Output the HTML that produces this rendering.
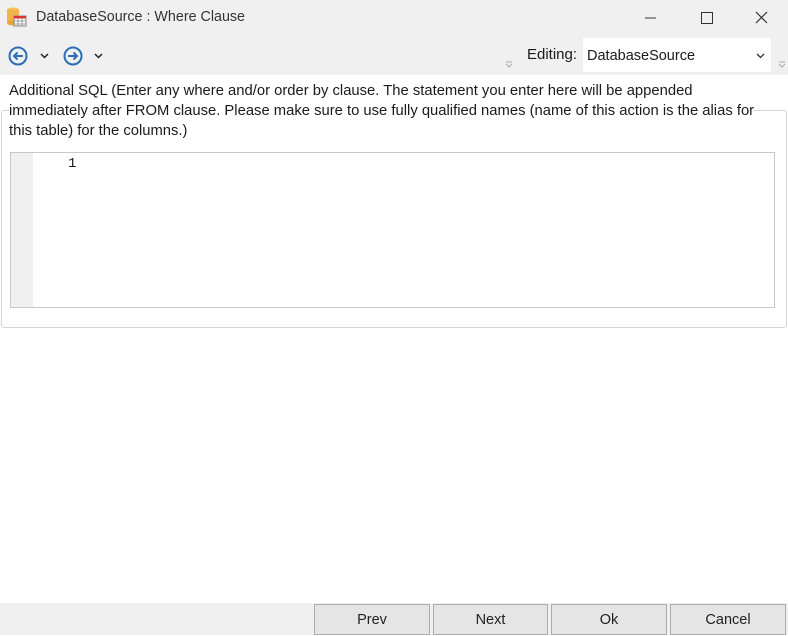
<!DOCTYPE html>
<html><head><style>
body{margin:0;width:788px;height:635px;background:#fff;font-family:"Liberation Sans",sans-serif;position:relative;overflow:hidden;color:#1a1a1a}
.abs{position:absolute}
.btn{position:absolute;top:604px;height:31px;background:#e5e5e5;border:1px solid #adadad;box-sizing:border-box;font-size:14.5px;text-align:center;line-height:31px;color:#222}
</style></head><body>
<div class="abs" style="left:0;top:0;width:788px;height:75px;background:#f0f0f0"></div>
<svg class="abs" style="left:6px;top:7px" width="22" height="20" viewBox="0 0 22 20">
<ellipse cx="7" cy="3" rx="6" ry="2.5" fill="#f4c05a"/><rect x="1" y="3" width="12" height="13" fill="#f0b347"/><ellipse cx="7" cy="16" rx="6" ry="2.5" fill="#e8a535"/>
<rect x="8" y="9" width="12" height="10" fill="#fff" stroke="#888" stroke-width="1"/><rect x="8" y="9" width="12" height="2.5" fill="#d33"/>
<path d="M12 11v8M16 11v8M8 14h12M8 17h12" stroke="#888" stroke-width=".8"/></svg>
<div class="abs" style="left:36px;top:9px;font-size:14.3px;color:#333">DatabaseSource : Where Clause</div>
<svg class="abs" style="left:640px;top:8px" width="140" height="20">
<path d="M5 10h11" stroke="#333"/><rect x="61.5" y="4.5" width="11" height="11" fill="none" stroke="#333"/>
<path d="M116 4l11 11M127 4l-11 11" stroke="#333" stroke-width="1.2"/></svg>
<svg class="abs" style="left:8px;top:45px" width="100" height="22">
<circle cx="10" cy="11" r="8.5" fill="none" stroke="#2e6db3" stroke-width="2"/><path d="M15 11H6M9.5 7.5L6 11l3.5 3.5" fill="none" stroke="#2e6db3" stroke-width="2"/>
<path d="M33 9l3.5 3.5L40 9" fill="none" stroke="#222" stroke-width="1.5"/>
<circle cx="65" cy="11" r="8.5" fill="none" stroke="#2e6db3" stroke-width="2"/><path d="M60 11h9M65.5 7.5L69 11l-3.5 3.5" fill="none" stroke="#2e6db3" stroke-width="2"/>
<path d="M87 9l3.5 3.5L94 9" fill="none" stroke="#222" stroke-width="1.5"/></svg>
<svg class="abs" style="left:505px;top:60px" width="8" height="8"><path d="M1 2h6M1 4l3 3 3-3" fill="none" stroke="#aaa"/></svg>
<svg class="abs" style="left:778px;top:60px" width="8" height="8"><path d="M1 2h6M1 4l3 3 3-3" fill="none" stroke="#aaa"/></svg>
<div class="abs" style="left:527px;top:46px;font-size:15px">Editing:</div>
<div class="abs" style="left:583px;top:38px;width:188px;height:34px;background:#fff"></div>
<div class="abs" style="left:587px;top:48px;font-size:14.5px">DatabaseSource</div>
<svg class="abs" style="left:756px;top:52px" width="10" height="8"><path d="M1 2l3.5 3.5L8 2" fill="none" stroke="#333" stroke-width="1.3"/></svg>
<div class="abs" style="left:1px;top:110px;width:784px;height:216px;border:1px solid #d5d5d5;border-radius:3px"></div>
<div class="abs" style="left:0;top:81px;width:788px;padding-left:9px;box-sizing:border-box;font-size:14.8px;line-height:20px;white-space:nowrap"><span style="background:#fff;padding-right:4px">Additional SQL (Enter any where and/or order by clause. The statement you enter here will be appended<br>immediately after FROM clause. Please make sure to use fully qualified names (name of this action is the alias for<br>this table) for the columns.)</span></div>
<div class="abs" style="left:10px;top:152px;width:765px;height:156px;border:1px solid #c8c8c8;box-sizing:border-box;background:#fff"></div>
<div class="abs" style="left:11px;top:153px;width:22px;height:154px;background:#f0f0f0"></div>
<div class="abs" style="left:68px;top:156px;font-family:'Liberation Mono',monospace;font-size:14px">1</div>
<div class="abs" style="left:0;top:603px;width:788px;height:32px;background:#f0f0f0"></div>
<div class="btn" style="left:314px;width:116px">Prev</div>
<div class="btn" style="left:433px;width:115px">Next</div>
<div class="btn" style="left:551px;width:116px">Ok</div>
<div class="btn" style="left:670px;width:116px">Cancel</div>
</body></html>
